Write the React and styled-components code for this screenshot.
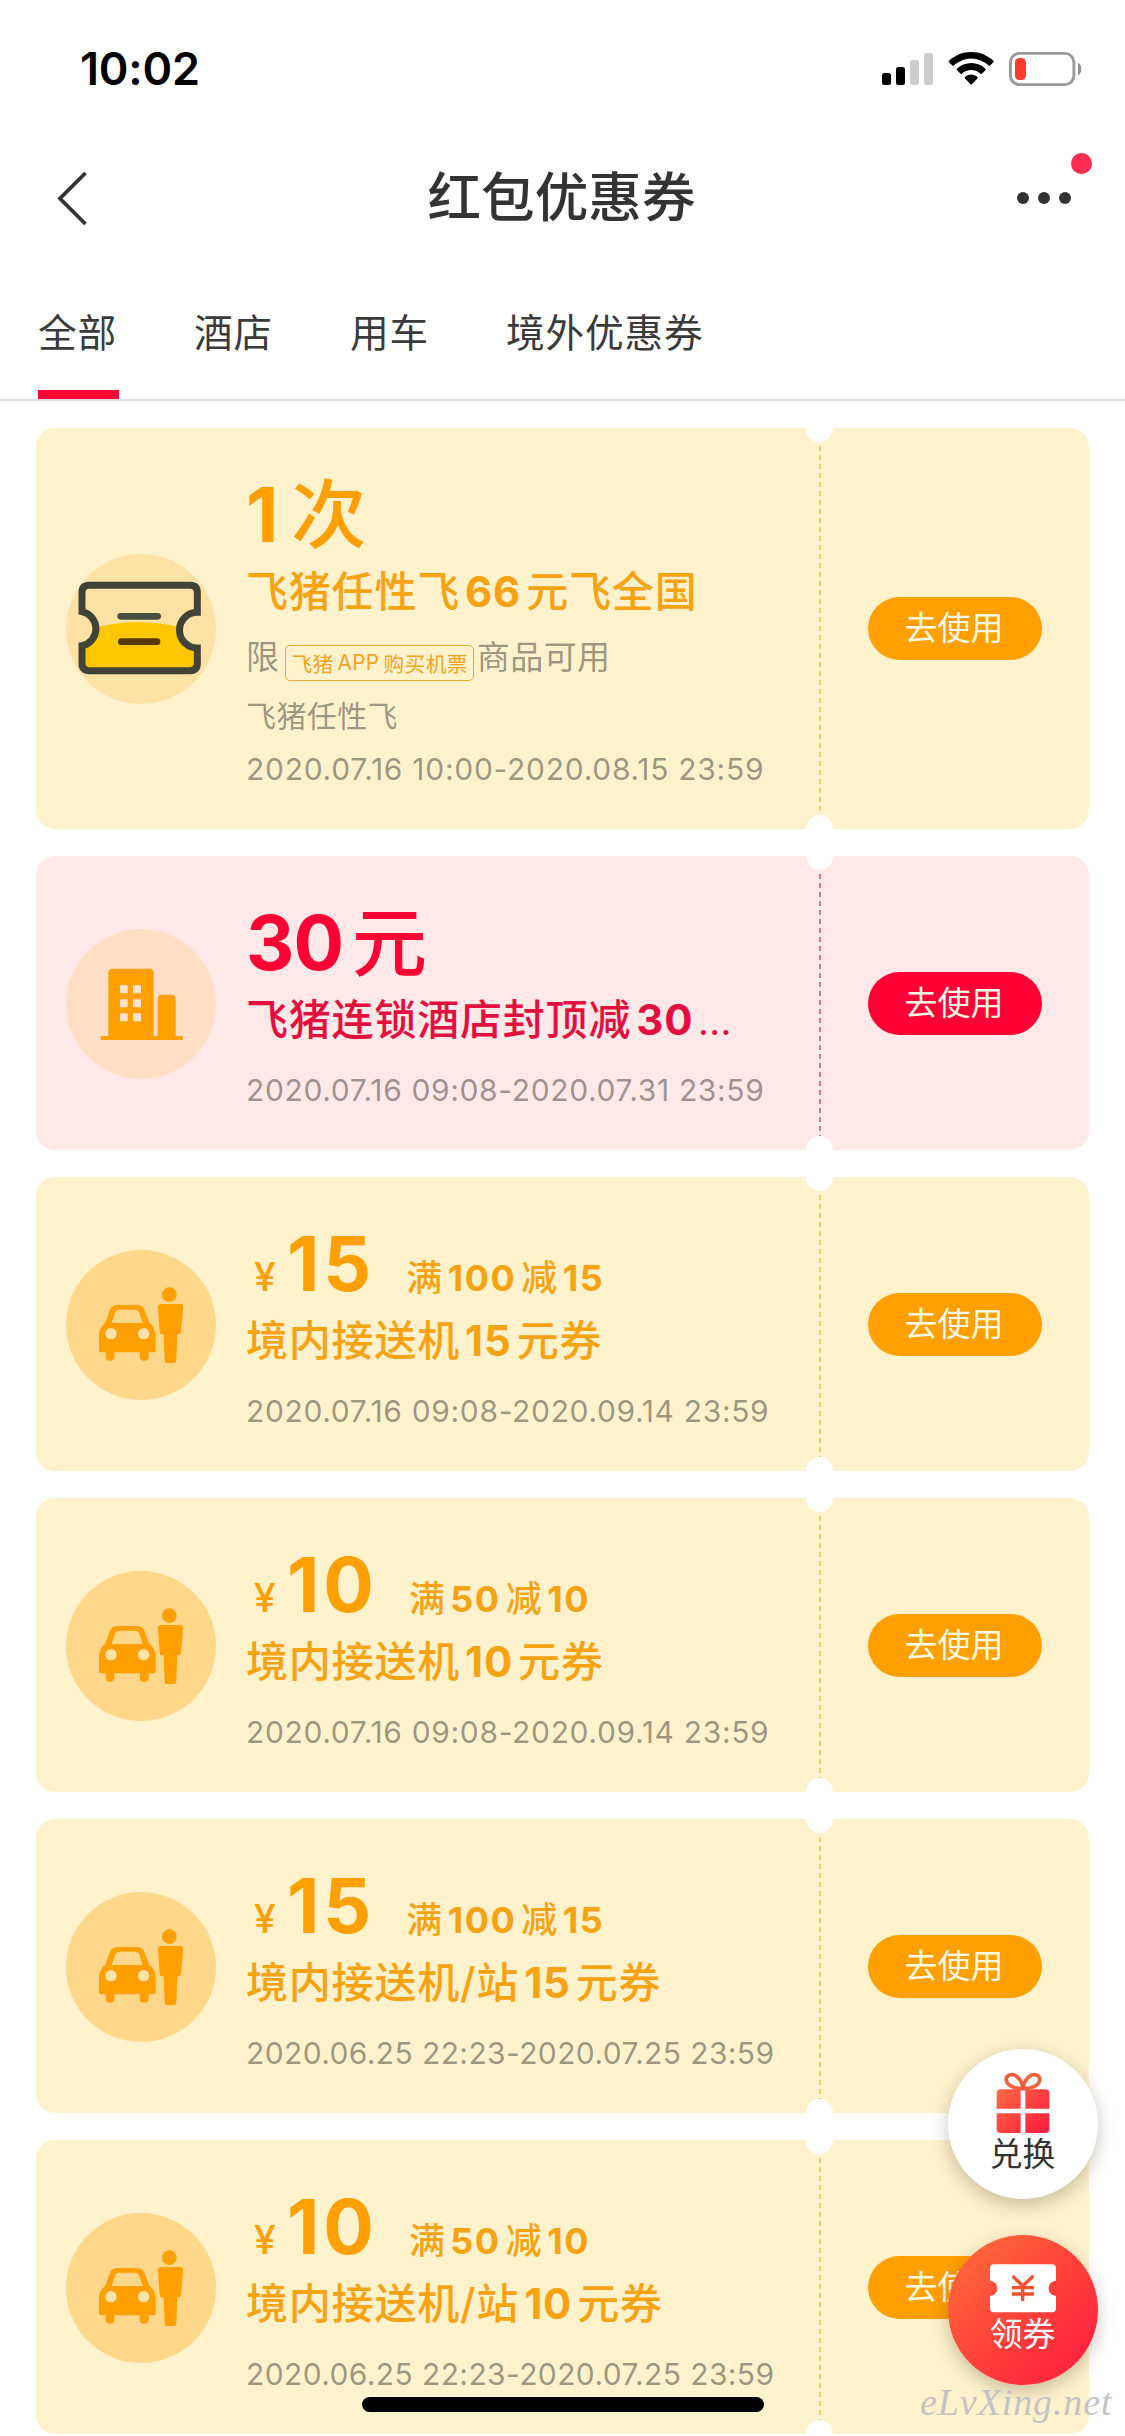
import React from "react";
import styled, { createGlobalStyle } from "styled-components";

const FONT = `Inter, "Noto Sans CJK SC", "Noto Sans", sans-serif`;

const Global = createGlobalStyle`
  * { box-sizing: border-box; }
  body { margin: 0; background: #fff; font-family: ${FONT}; }
`;

const TONES = {
  yellow: { bg: "#fef2cd", main: "#ff9f00", title: "#f6a313", dash: "#e4cf70" },
  pink: { bg: "#ffe8e8", main: "#ff0036", title: "#e2103e", dash: "#cf7d94" },
};

const Screen = styled.main`
  position: relative;
  width: 1125px;
  height: 2436px;
  overflow: hidden;
  background: #fff;
  display: flex;
  flex-direction: column;
`;

const StatusBar = styled.header`
  height: 132px;
  padding: 5px 42px 0 80px;
  display: flex;
  align-items: center;
  justify-content: space-between;
  flex: none;
`;

const Clock = styled.time`
  font-size: 45px;
  font-weight: 600;
  line-height: 60px;
  letter-spacing: -0.2px;
  color: #000;
`;

const NavBar = styled.nav`
  height: 132px;
  padding: 0 54px 0 56px;
  display: grid;
  grid-template-columns: 54px 1fr 54px;
  align-items: center;
  flex: none;
`;

const NavTitle = styled.h1`
  margin: 0;
  padding-right: 4px;
  font-size: 53.6px;
  font-weight: 500;
  line-height: 70px;
  text-align: center;
  color: #333;
`;

const MoreButton = styled.div`
  position: relative;
  display: flex;
  gap: 9px;
`;

const MoreDot = styled.i`
  width: 12px;
  height: 12px;
  border-radius: 50%;
  background: #333;
`;

const Unread = styled.i`
  position: absolute;
  right: -21px;
  top: -39px;
  width: 21px;
  height: 21px;
  border-radius: 50%;
  background: #ff2d51;
`;

const Tabs = styled.div`
  height: 137px;
  padding: 0 38px;
  display: flex;
  gap: 75px;
  border-bottom: 2px solid #dcdcdc;
  flex: none;
`;

const Tab = styled.div`
  display: flex;
  align-items: center;
  padding: 12px 2px 0 0;
  font-size: 38.7px;
  letter-spacing: 0.8px;
  line-height: 60px;
  color: #3a3a3a;
  border-bottom: 9px solid ${(p) => (p.$active ? "#ff0036" : "transparent")};
`;

const List = styled.section`
  display: flex;
  flex-direction: column;
  gap: 27px;
  padding: 27px 36px 0;
`;

const Card = styled.article`
  position: relative;
  flex: none;
  display: flex;
  align-items: stretch;
  border-radius: 19px;
  background: ${(p) => TONES[p.$tone].bg};
  color: ${(p) => TONES[p.$tone].main};

  &::before,
  &::after {
    content: "";
    position: absolute;
    left: 770px;
    width: 27px;
    height: 14px;
    background: #fff;
  }
  &::before {
    top: 0;
    border-radius: 0 0 14px 14px;
  }
  &::after {
    bottom: 0;
    border-radius: 14px 14px 0 0;
  }
`;

const Badge = styled.div`
  align-self: center;
  width: 150px;
  height: 150px;
  margin: 1px 0 0 30px;
  border-radius: 50%;
  background: ${(p) => p.$bg};
  flex: none;
`;

const Info = styled.div`
  width: 568px;
  margin-left: 30px;
  padding: 38px 0;
  display: flex;
  flex-direction: column;
  white-space: nowrap;
`;

const Num = styled.b`
  font-weight: 700;
  margin: 0 0.12em;
  &:first-child {
    margin-left: 0;
  }
  &:last-child {
    margin-right: 0;
  }
`;

const Dots = styled.span`
  font-size: 0.82em;
  line-height: 0;
`;

const Amount = styled.div`
  display: flex;
  align-items: baseline;
  font-size: 75px;
  line-height: 98px;
  height: 98px;
  font-weight: 500;
`;

const Figure = styled.span`
  ${Num} {
    letter-spacing: ${(p) => p.$track}px;
  }
`;

const Yen = styled.span`
  width: 41px;
  padding-left: 8px;
  font-size: 39px;
`;

const Condition = styled.span`
  margin-left: 31px;
  font-size: 36px;
  letter-spacing: 0.4px;
  line-height: 1;
  color: ${(p) => TONES[p.$tone].title};

  ${Num} {
    letter-spacing: 1.5px;
    margin: 0 0.14em;
  }
`;

const Name = styled.h2`
  margin: 0;
  font-size: 42px;
  letter-spacing: 0.8px;
  line-height: 56px;
  height: 56px;
  font-weight: 500;
  color: ${(p) => TONES[p.$tone].title};
`;

const Scope = styled.div`
  height: 69px;
  margin-bottom: 3px;
  display: flex;
  align-items: center;
  font-size: 33px;
  letter-spacing: 0.4px;
  color: rgba(0, 0, 0, 0.4);
`;

const Tag = styled.span`
  height: 36px;
  margin: 16px 3px 0 6px;
  padding: 0 5px;
  display: flex;
  align-items: center;
  border: 1.5px solid #ecab30;
  border-radius: 5px;
  font-size: 20.8px;
  letter-spacing: 0.3px;
  color: #f0a41f;

  b {
    font-weight: 400;
    margin: 0 4px;
  }
`;

const Desc = styled.div`
  font-size: 30px;
  letter-spacing: 0.4px;
  line-height: 48px;
  margin-bottom: 8px;
  color: rgba(0, 0, 0, 0.4);
`;

const Period = styled.div`
  margin: ${(p) => (p.$spaced ? 21 : 0)}px 0 1px;
  font-size: 30px;
  line-height: 42px;
  letter-spacing: ${(p) => p.$track}px;
  color: rgba(0, 0, 0, 0.4);
`;

const Stub = styled.div`
  flex: 1;
  margin: 18px 0 12px 4px;
  padding: 0 0 0 51px;
  display: flex;
  align-items: center;
  background: repeating-linear-gradient(
      to bottom,
      ${(p) => TONES[p.$tone].dash} 0 5px,
      transparent 5px 9px
    )
    1px 0 / 2px 100% no-repeat;
`;

const UseButton = styled.button`
  width: 174px;
  height: 63px;
  margin: -6px 0 0 -1px;
  padding: 0 2px 1px 0;
  border: 0;
  border-radius: 32px;
  background: ${(p) => TONES[p.$tone].main};
  color: #fffbe6;
  font-family: inherit;
  font-size: 33px;
  line-height: 60px;
`;

const Floating = styled.aside`
  position: absolute;
  left: 948px;
  top: 2049px;
  display: flex;
  flex-direction: column;
  gap: 36px;
`;

const Fab = styled.div`
  width: 150px;
  height: 150px;
  border-radius: 50%;
  padding: 23px 1px 0 0;
  display: flex;
  flex-direction: column;
  align-items: center;
  font-size: 32.8px;
  line-height: ${(p) => (p.$hot ? 31 : 42)}px;
  color: ${(p) => (p.$hot ? "#fff" : "#333")};
  background: ${(p) => (p.$hot ? "linear-gradient(135deg, #ff6a3c 8%, #ff4238 50%, #ff2340 88%)" : "#fff")};
  box-shadow: 0 6px 18px rgba(60, 50, 20, 0.28);
`;

const FabIcon = styled.svg`
  display: block;
  height: 61px;
  flex: none;
`;

const HomeIndicator = styled.div`
  position: absolute;
  left: 362px;
  top: 2397px;
  width: 402px;
  height: 15px;
  border-radius: 8px;
  background: #000;
`;

const Watermark = styled.div`
  position: absolute;
  left: 920px;
  top: 2378px;
  font: italic 38px/48px "Liberation Serif", serif;
  letter-spacing: 0.9px;
  color: #c4c3c4;
`;

const StatusIcons = () => (
  <svg width="202" height="36" viewBox="881 51 202 36">
    <rect x="882" y="73" width="9" height="12" rx="2.5" />
    <rect x="896" y="67" width="9" height="18" rx="2.5" />
    <rect x="910" y="60" width="9" height="25" rx="2.5" fill="#ccc" />
    <rect x="924" y="53" width="9" height="32" rx="2.5" fill="#ccc" />
    <path d="M971.2 52C962.500 52 954.800 55.400 949 60.800Q948.300 61.500 949 62.200L952.300 65.600Q953 66.200 953.700 65.600A25.300 25.300 0 0 1 988.700 65.600Q989.400 66.200 990.100 65.600L993.400 62.200Q994.100 61.500 993.400 60.800C987.600 55.400 979.900 52 971.200 52Z" />
    <path d="M971.200 63C965.500 63 960.700 65.200 957 68.800Q956.300 69.500 957 70.200L960.600 73.800Q961.200 74.300 961.900 73.800A13.600 13.600 0 0 1 980.500 73.800Q981.200 74.300 981.800 73.800L985.400 70.200Q986.100 69.500 985.400 68.800C981.700 65.200 976.900 63 971.200 63Z" />
    <path d="M971.200 74.600C968.700 74.600 966.600 75.500 965 77Q964.400 77.700 965 78.400L970.500 84.200Q971.200 84.900 971.900 84.200L977.400 78.400Q978 77.700 977.400 77C975.800 75.500 973.700 74.600 971.200 74.600Z" />
    <rect x="1010.400" y="53.400" width="63.500" height="31.200" rx="9" fill="none" stroke="#999" strokeWidth="2.900" />
    <rect x="1015" y="58" width="11" height="22" rx="4.500" fill="#ff3b30" />
    <path d="M1078 62.500a8 8 0 0 1 0 13z" fill="#8f8f8f" />
  </svg>
);

const BackIcon = () => (
  <svg width="32" height="56" viewBox="0 0 32 56" fill="none" stroke="#333" strokeWidth="3.800">
    <path d="M29.500 3 4 28.500 29.500 54" />
  </svg>
);

const TicketIcon = () => (
  <svg width="150" height="150" viewBox="18 18 450 450">
    <path d="M112 238Q235 208 362 238Q362 278 412 298V346Q412 368 394 368H84Q66 368 66 346V298Q112 282 112 238Z" fill="#fdc600" />
    <path
      d="M66 191V134Q66 112 88 112H390Q412 112 412 134V193A53 53 0 0 0 412 300V346Q412 368 390 368H88Q66 368 66 346V293A52 52 0 0 0 66 191Z"
      fill="none"
      stroke="#424338"
      strokeWidth="21"
    />
    <path d="M182 205H293" stroke="#46503f" strokeWidth="20" strokeLinecap="round" />
    <path d="M184 281H291" stroke="#573a05" strokeWidth="20" strokeLinecap="round" />
  </svg>
);

const CarIcon = () => (
  <svg width="150" height="150" viewBox="18 18 450 450" fill="#ff9f00">
    <path
      fillRule="evenodd"
      d="M172 183H231Q246 183 253 197L268 236Q287 250 287 276V317Q287 325 279 325H266V338Q266 350 252 350Q239 350 239 338V325H163V338Q163 350 150 350Q137 350 137 338V325H125Q117 325 117 317V276Q117 250 136 236L150 197Q157 183 172 183ZM180 197Q169 197 165 206L155 237H248L238 206Q234 197 223 197Z"
    />
    <circle cx="153" cy="269" r="17" fill="#ffe3ab" />
    <circle cx="251" cy="269" r="17" fill="#ffe3ab" />
    <circle cx="328" cy="152" r="22" />
    <path d="M303 180H361Q370 180 369 189L363 264Q362 271 354 271H352L349 349Q349 357 341 357H321Q314 357 314 349L311 271H305Q299 271 299 264L294 189Q294 180 303 180Z" />
  </svg>
);

const HotelIcon = () => (
  <svg width="150" height="150" viewBox="18 15 450 450" fill="#ff9f00">
    <path d="M157 134H269Q281 134 281 146V336H293V225Q293 212 306 212H334Q347 212 347 225V336H364Q369 336 369 342Q369 348 364 348H126Q121 348 121 342Q121 336 126 336H145V146Q145 134 157 134Z" />
    <g fill="#ffe4cd">
      {[184, 226, 268].map((y) => (
        <React.Fragment key={y}>
          <rect x="180" y={y} width="23" height="24" rx="2" />
          <rect x="219" y={y} width="24" height="24" rx="2" />
        </React.Fragment>
      ))}
    </g>
  </svg>
);

const GiftIcon = () => (
  <FabIcon width="54" viewBox="0 0 162 183">
    <defs>
      <linearGradient id="gift" gradientUnits="userSpaceOnUse" x1="10" y1="40" x2="150" y2="170">
        <stop offset="0" stopColor="#ff6b45" />
        <stop offset="1" stopColor="#ff1f3d" />
      </linearGradient>
    </defs>
    <g fill="none" stroke="#f0603f" strokeWidth="11">
      <path d="M80 50C62 50 34 44 31 25C28 8 50 3 62 13C73 22 80 38 80 50Z" />
      <path d="M82 50C100 50 128 44 131 25C134 8 112 3 100 13C89 22 82 38 82 50Z" />
    </g>
    <g fill="url(#gift)">
      <path d="M14 52H74V110H2V64Q2 52 14 52Z" />
      <path d="M88 52H148Q160 52 160 64V110H88Z" />
      <path d="M2 124H74V183H14Q2 183 2 171Z" />
      <path d="M88 124H160V171Q160 183 148 183H88Z" />
    </g>
  </FabIcon>
);

const VoucherIcon = () => (
  <FabIcon width="66" viewBox="0 -19 198 183">
    <path
      d="M12 0H186Q198 0 198 12V49Q176 52 176 72Q176 92 198 95V132Q198 144 186 144H12Q0 144 0 132V95Q22 92 22 72Q22 52 0 49V12Q0 0 12 0Z"
      fill="#fff"
    />
    <path d="M68 35 98 65 130 35M66 70H132M66 89H132M98 65V110" fill="none" stroke="#f4502f" strokeWidth="10" />
  </FabIcon>
);

const ICONS = {
  ticket: { Icon: TicketIcon, bg: "#fee1a4" },
  hotel: { Icon: HotelIcon, bg: "#ffdec6" },
  car: { Icon: CarIcon, bg: "#ffd78b" },
};

const COUPONS = [
  {
    tone: "yellow",
    icon: "ticket",
    amount: "1次",
    amountTrack: 4,
    name: "飞猪任性飞66元飞全国",
    scope: true,
    period: "2020.07.16 10:00-2020.08.15 23:59",
    periodTrack: 0.72,
  },
  {
    tone: "pink",
    icon: "hotel",
    amount: "30元",
    amountTrack: -1,
    name: "飞猪连锁酒店封顶减30...",
    period: "2020.07.16 09:08-2020.07.31 23:59",
    periodTrack: 0.64,
  },
  {
    tone: "yellow",
    icon: "car",
    amount: "15",
    amountTrack: 4,
    condition: "满100减15",
    name: "境内接送机15元券",
    period: "2020.07.16 09:08-2020.09.14 23:59",
    periodTrack: 0.66,
  },
  {
    tone: "yellow",
    icon: "car",
    amount: "10",
    amountTrack: 4,
    condition: "满50减10",
    name: "境内接送机10元券",
    period: "2020.07.16 09:08-2020.09.14 23:59",
    periodTrack: 0.66,
  },
  {
    tone: "yellow",
    icon: "car",
    amount: "15",
    amountTrack: 4,
    condition: "满100减15",
    name: "境内接送机/站15元券",
    period: "2020.06.25 22:23-2020.07.25 23:59",
    periodTrack: 0.39,
  },
  {
    tone: "yellow",
    icon: "car",
    amount: "10",
    amountTrack: 4,
    condition: "满50减10",
    name: "境内接送机/站10元券",
    period: "2020.06.25 22:23-2020.07.25 23:59",
    periodTrack: 0.39,
  },
];

/* Sets the digits bold, with a little air between them and the characters around. */
const Mixed = ({ text }) =>
  text
    .split(/(\d+|\.{3})/)
    .filter(Boolean)
    .map((part, i) => {
      if (/\d/.test(part)) return <Num key={i}>{part}</Num>;
      return part === "..." ? <Dots key={i}>{part}</Dots> : <span key={i}>{part}</span>;
    });

const Coupon = ({ tone, icon, amount, amountTrack, condition, name, scope, period, periodTrack }) => {
  const { Icon, bg } = ICONS[icon];
  return (
    <Card $tone={tone}>
      <Badge $bg={bg}>
        <Icon />
      </Badge>
      <Info>
        <Amount>
          {condition && <Yen>¥</Yen>}
          <Figure $track={amountTrack}>
            <Mixed text={amount} />
          </Figure>
          {condition && (
            <Condition $tone={tone}>
              <Mixed text={condition} />
            </Condition>
          )}
        </Amount>
        <Name $tone={tone}>
          <Mixed text={name} />
        </Name>
        {scope && (
          <>
            <Scope>
              限
              <Tag>
                飞猪<b>APP</b>购买机票
              </Tag>
              商品可用
            </Scope>
            <Desc>飞猪任性飞</Desc>
          </>
        )}
        <Period $spaced={!scope} $track={periodTrack}>
          {period}
        </Period>
      </Info>
      <Stub $tone={tone}>
        <UseButton $tone={tone}>去使用</UseButton>
      </Stub>
    </Card>
  );
};

export default function App() {
  return (
    <>
      <Global />
      <Screen>
        <StatusBar>
          <Clock>10:02</Clock>
          <StatusIcons />
        </StatusBar>
        <NavBar>
          <BackIcon />
          <NavTitle>红包优惠券</NavTitle>
          <MoreButton>
            <MoreDot />
            <MoreDot />
            <MoreDot />
            <Unread />
          </MoreButton>
        </NavBar>
        <Tabs>
          <Tab $active>全部</Tab>
          <Tab>酒店</Tab>
          <Tab>用车</Tab>
          <Tab>境外优惠券</Tab>
        </Tabs>
        <List>
          {COUPONS.map((c, i) => (
            <Coupon key={i} {...c} />
          ))}
        </List>
        <Floating>
          <Fab>
            <GiftIcon />
            兑换
          </Fab>
          <Fab $hot>
            <VoucherIcon />
            领券
          </Fab>
        </Floating>
        <HomeIndicator />
        <Watermark>eLvXing.net</Watermark>
      </Screen>
    </>
  );
}
